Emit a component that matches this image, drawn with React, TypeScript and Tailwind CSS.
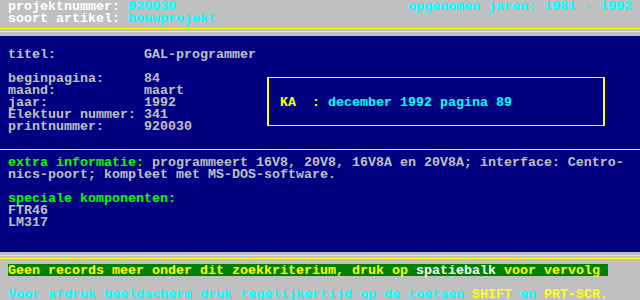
import React from "react";

const Row = ({ children, className = "" }: { children?: React.ReactNode; className?: string }) => (
  <div className={"h-[12px] leading-[13px] whitespace-pre px-2 " + className}>{children}</div>
);

export default function App() {
  return (
    <div
      className="w-[640px] h-[300px] overflow-hidden bg-[#c0c0c0] text-[13.333px] font-bold"
      style={{ fontFamily: '"Liberation Mono", "DejaVu Sans Mono", monospace' }}
    >
      {/* header */}
      <Row className="flex justify-between">
        <span>
          <span className="text-white">projektnummer: </span>
          <span className="text-[#00ffff]">920030</span>
        </span>
        <span className="text-[#00ffff]">opgenomen jaren: 1981 - 1992</span>
      </Row>
      <Row>
        <span className="text-white">soort artikel: </span>
        <span className="text-[#00ffff]">bouwprojekt</span>
      </Row>
      <div className="h-[12px] flex flex-col pt-[4px] gap-[2px]">
        <div className="h-[1px] bg-[#ffff00]" />
        <div className="h-[1px] bg-[#ffff00]" />
      </div>

      {/* blue main area */}
      <div className="h-[216px] bg-[#000080] text-[#c0c0c0]">
        <Row />
        <Row>{"titel:           GAL-programmer"}</Row>
        <Row />
        <div className="flex h-[60px]">
          <div className="w-[267px] shrink-0">
            <Row>{"beginpagina:     84"}</Row>
            <Row>{"maand:           maart"}</Row>
            <Row>{"jaar:            1992"}</Row>
            <Row>{"Elektuur nummer: 341"}</Row>
            <Row>{"printnummer:     920030"}</Row>
          </div>
          <div className="mt-[5px] h-[49px] w-[338px] border-x-2 border-y border-[#ffff00] pt-[18px] pl-[11px]">
            <div className="h-[12px] leading-[13px] whitespace-pre">
              <span className="text-[#ffff00]">{"KA  : "}</span>
              <span className="text-[#00ffff]">december 1992 pagina 89</span>
            </div>
          </div>
        </div>
        <Row />
        <div className="h-[12px] pt-[5px]">
          <div className="h-[1px] bg-[#ffff00]" />
        </div>
        <Row>
          <span className="text-[#00ff00]">extra informatie: </span>
          <span>programmeert 16V8, 20V8, 16V8A en 20V8A; interface: Centro-</span>
        </Row>
        <Row>nics-poort; kompleet met MS-DOS-software.</Row>
        <Row />
        <Row className="text-[#00ff00]">speciale komponenten:</Row>
        <Row>FTR46</Row>
        <Row>LM317</Row>
      </div>

      {/* footer */}
      <div className="h-[12px] flex flex-col pt-[3px] gap-[2px]">
        <div className="h-[1px] bg-[#ffff00]" />
        <div className="h-[1px] bg-[#ffff00]" />
      </div>
      <Row>
        <div className="w-[600px] h-[12px] bg-[#008000] text-[#ffff00]">
          {"Geen records meer onder dit zoekkriterium, druk op "}
          <span className="text-white">spatiebalk</span>
          {" voor vervolg"}
        </div>
      </Row>
      <Row />
      <Row className="text-[#00ffff]">
        {"Voor afdruk beeldscherm druk tegelijkertijd op de toetsen "}
        <span className="text-[#ffff00]">SHIFT</span>
        {" en "}
        <span className="text-[#ffff00]">PRT-SCR.</span>
      </Row>
    </div>
  );
}
